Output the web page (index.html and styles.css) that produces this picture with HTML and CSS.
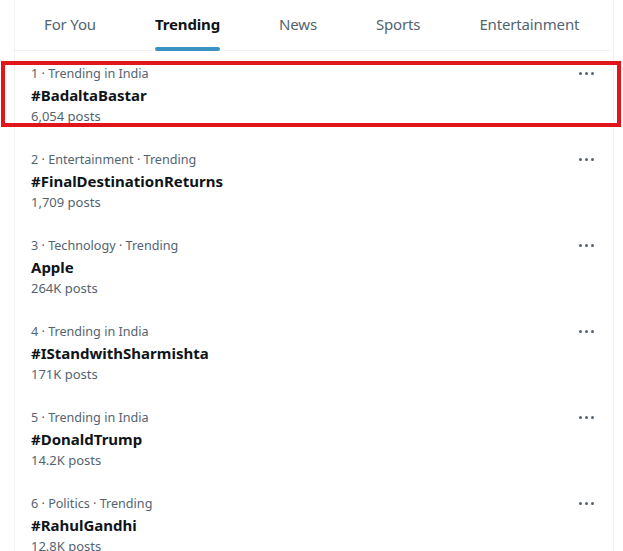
FILE: index.html
```html
<!DOCTYPE html>
<html>
<head>
<meta charset="utf-8">
<link rel="stylesheet" href="styles.css">
</head>
<body>
<div class="column">
  <nav class="tabs">
    <div class="tab">For You</div>
    <div class="tab active">Trending</div>
    <div class="tab">News</div>
    <div class="tab">Sports</div>
    <div class="tab last">Entertainment</div>
  </nav>
  <div class="list">
    <div class="item highlighted">
      <div class="text">
        <div class="meta">1 · Trending in India</div>
        <div class="title">#BadaltaBastar</div>
        <div class="count">6,054 posts</div>
      </div>
      <div class="more"><span></span><span></span><span></span></div>
    </div>
    <div class="item">
      <div class="text">
        <div class="meta">2 · Entertainment · Trending</div>
        <div class="title">#FinalDestinationReturns</div>
        <div class="count">1,709 posts</div>
      </div>
      <div class="more"><span></span><span></span><span></span></div>
    </div>
    <div class="item">
      <div class="text">
        <div class="meta">3 · Technology · Trending</div>
        <div class="title">Apple</div>
        <div class="count">264K posts</div>
      </div>
      <div class="more"><span></span><span></span><span></span></div>
    </div>
    <div class="item">
      <div class="text">
        <div class="meta">4 · Trending in India</div>
        <div class="title">#IStandwithSharmishta</div>
        <div class="count">171K posts</div>
      </div>
      <div class="more"><span></span><span></span><span></span></div>
    </div>
    <div class="item">
      <div class="text">
        <div class="meta">5 · Trending in India</div>
        <div class="title">#DonaldTrump</div>
        <div class="count">14.2K posts</div>
      </div>
      <div class="more"><span></span><span></span><span></span></div>
    </div>
    <div class="item">
      <div class="text">
        <div class="meta">6 · Politics · Trending</div>
        <div class="title">#RahulGandhi</div>
        <div class="count">12.8K posts</div>
      </div>
      <div class="more"><span></span><span></span><span></span></div>
    </div>
  </div>
</div>
<div class="annotation"></div>
</body>
</html>
```

FILE: styles.css
```css
html, body {
  margin: 0;
  padding: 0;
  background: #ffffff;
  font-family: "Noto Sans", "Open Sans", sans-serif;
  color: #0f1419;
  height: 551px;
  overflow: hidden;
}

.column {
  margin-left: 14px;
  width: 598px;
  height: 551px;
  border-left: 1px solid #eff3f4;
  border-right: 1px solid #eff3f4;
}

.tabs {
  display: flex;
  height: 51px;
  border-bottom: 1px solid #eff3f4;
  padding-left: 31px;
  margin-left: -2px;
  width: 597px;
  box-sizing: border-box;
}

.tab {
  position: relative;
  font-size: 15px;
  color: #536471;
  line-height: 48px;
  height: 51px;
  margin-right: 59px;
  white-space: nowrap;
  letter-spacing: -0.15px;
}

.tab.last {
  margin-right: 0;
}

.tab.active {
  font-weight: 700;
  color: #0f1419;
}

.tab.active::after {
  content: "";
  position: absolute;
  left: 0;
  right: 0;
  bottom: 0;
  height: 4px;
  border-radius: 2px;
  background: #3a92c2;
}

.item {
  display: flex;
  justify-content: space-between;
  height: 86px;
  box-sizing: border-box;
  padding: 15px 19px 13px 16px;
}

.meta {
  font-size: 12.6px;
  line-height: 16px;
  color: #536471;
}

.title {
  font-size: 15px;
  font-weight: 700;
  line-height: 27px;
  color: #0f1419;
}

.count {
  font-size: 13px;
  line-height: 14px;
  color: #536471;
}

.more {
  display: flex;
  gap: 3px;
  height: 14px;
  align-items: center;
}

.more span {
  width: 3px;
  height: 3px;
  border-radius: 50%;
  background: #536471;
}

.annotation {
  position: absolute;
  left: 1px;
  top: 61px;
  width: 620px;
  height: 66px;
  box-sizing: border-box;
  border: 4px solid #e0161b;
}
```
